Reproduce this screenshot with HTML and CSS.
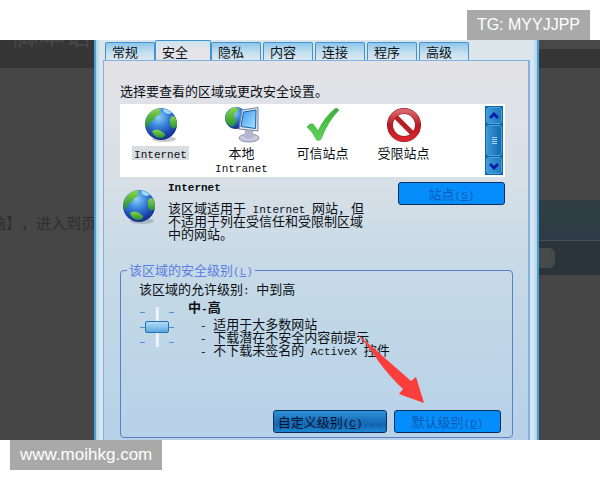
FILE: index.html
```html
<!DOCTYPE html>
<html lang="zh-CN">
<head>
    <meta charset="UTF-8">
    <meta name="viewport" content="width=device-width, initial-scale=1.0">
    <title>Internet 安全设置</title>
    <link rel="stylesheet" href="styles.css">
</head>
<body>
    <svg class="defs" width="0" height="0" aria-hidden="true">
        <defs>
            <radialGradient id="sea" cx="0.42" cy="0.28" r="0.75">
                <stop offset="0" stop-color="#8fd0fa"/>
                <stop offset="0.4" stop-color="#3b86dd"/>
                <stop offset="0.8" stop-color="#1b3fa8"/>
                <stop offset="1" stop-color="#152a80"/>
            </radialGradient>
            <linearGradient id="land" x1="0" y1="0" x2="0" y2="1">
                <stop offset="0" stop-color="#8fd64a"/>
                <stop offset="1" stop-color="#1f8f35"/>
            </linearGradient>
            <linearGradient id="screen" x1="0" y1="0" x2="1" y2="1">
                <stop offset="0" stop-color="#3f9cee"/>
                <stop offset="1" stop-color="#a8e2ff"/>
            </linearGradient>
            <linearGradient id="tick" x1="0" y1="0" x2="0" y2="1">
                <stop offset="0" stop-color="#3fae3c"/>
                <stop offset="1" stop-color="#5fd455"/>
            </linearGradient>
            <linearGradient id="ban" x1="0" y1="0" x2="0" y2="1">
                <stop offset="0" stop-color="#d8656a"/>
                <stop offset="0.5" stop-color="#b81a22"/>
                <stop offset="1" stop-color="#d8262c"/>
            </linearGradient>
            <symbol id="globe" viewBox="0 0 34 36">
                <ellipse cx="20" cy="32" rx="12" ry="3" fill="#8a94a0" opacity="0.5"/>
                <circle cx="17" cy="17" r="16" fill="url(#sea)"/>
                <path d="M1.500 20C0.500 12 5 4 13 1.500L17 2L15 5L17 7L12 9L10 13L6 15L4 20Z" fill="url(#land)"/>
                <path d="M19 1.500L24 3L28 6L24 7L20 5Z" fill="#9fdcf5"/>
                <path d="M28 9L31 10Q34 16 32.500 20L29 22L26 18L26 12Z" fill="url(#land)"/>
                <path d="M8 24Q13 21 17 24L21 27Q21 31 16 31Q10 31 8 24Z" fill="url(#land)"/>
            </symbol>
        </defs>
    </svg>

    <header class="tag tag-top">TG: MYYJJPP</header>

    <main class="photo">
        <div class="backdrop backdrop-left">
            <div class="ghost-title">脚本语</div>
            <div class="ghost-text">脑】，进入到页</div>
        </div>

        <section class="dialog">
            <nav class="tabs">
                <button class="tab">常规</button>
                <button class="tab active">安全</button>
                <button class="tab">隐私</button>
                <button class="tab">内容</button>
                <button class="tab">连接</button>
                <button class="tab">程序</button>
                <button class="tab">高级</button>
            </nav>

            <div class="panel">
                <p class="intro">选择要查看的区域或更改安全设置。</p>

                <div class="zones">
                    <div class="zone">
                        <svg class="zone-icon" viewBox="0 0 34 36"><use href="#globe"/></svg>
                        <span class="zone-name selected"><span class="en">Internet</span></span>
                    </div>
                    <div class="zone">
                        <svg class="zone-icon" viewBox="0 0 34 36">
                            <circle cx="11" cy="11" r="11" fill="url(#sea)"/>
                            <path d="M0.500 14C-0.500 7 4 1 10 0L14 3L10 6L9 10L12 13L8 20Q2 19 0.500 14Z" fill="url(#land)"/>
                            <ellipse cx="24" cy="31" rx="10" ry="4" fill="#c6c8dc" stroke="#8b8fae"/>
                            <path d="M20 23L28 24L29 30Q24 33 19 30Z" fill="#b4b6d0"/>
                            <path d="M17 3L33 0.500L33 24L14 22Z" fill="#e4e6ec" stroke="#7483a0"/>
                            <path d="M18.500 5L31 3L30.500 21.500L16 19.500Z" fill="url(#screen)" stroke="#1e60b0"/>
                        </svg>
                        <span class="zone-name">本地<br><span class="en">Intranet</span></span>
                    </div>
                    <div class="zone">
                        <svg class="zone-icon" viewBox="0 0 34 36">
                            <path d="M1 20Q4 16 7 17L12 24Q19 9 30 1L33 3Q22 14 15 32Q12 35 10 32Q7 25 1 20Z" fill="url(#tick)" stroke="#36a437" stroke-width="0.600"/>
                        </svg>
                        <span class="zone-name">可信站点</span>
                    </div>
                    <div class="zone">
                        <svg class="zone-icon" viewBox="0 0 34 36">
                            <circle cx="17" cy="18" r="14" fill="#fff" stroke="#8e1c20" stroke-width="6"/>
                            <path d="M7 8L27 28" stroke="#b81f25" stroke-width="5"/>
                            <circle cx="17" cy="18" r="14" fill="none" stroke="url(#ban)" stroke-width="5"/>
                        </svg>
                        <span class="zone-name">受限站点</span>
                    </div>
                    <div class="scrollbar">
                        <button class="scroll-btn" aria-label="向上"><svg viewBox="0 0 10 8"><path d="M1 6L5 2L9 6" /></svg></button>
                        <div class="thumb"><i></i><i></i><i></i><i></i></div>
                        <button class="scroll-btn" aria-label="向下"><svg viewBox="0 0 10 8"><path d="M1 2L5 6L9 2" /></svg></button>
                    </div>
                </div>

                <div class="about">
                    <svg class="about-icon" viewBox="0 0 34 36"><use href="#globe"/></svg>
                    <div class="about-text">
                        <h2><span class="en">Internet</span></h2>
                        <p>该区域适用于<span class="en"> Internet </span>网站，但<br>不适用于列在受信任和受限制区域<br>中的网站。</p>
                    </div>
                    <button class="btn btn-flat btn-sites" disabled>站点<span class="en">(<u>S</u>)</span></button>
                </div>

                <fieldset class="level">
                    <legend>该区域的安全级别<span class="en">(<u>L</u>)</span></legend>
                    <label class="allowed" for="level">该区域的允许级别<span class="en">: </span>中到高</label>
                    <div class="level-body">
                        <div class="slider">
                            <div class="ticks"><i></i><i></i><i></i></div>
                            <input id="level" type="range" min="0" max="2" value="1">
                            <div class="ticks"><i></i><i></i><i></i></div>
                        </div>
                        <div class="level-text">
                            <h3>中<span class="en">-</span>高</h3>
                            <ul>
                                <li><span class="en">- </span>适用于大多数网站</li>
                                <li><span class="en">- </span>下载潜在不安全内容前提示</li>
                                <li><span class="en">- </span>不下载未签名的<span class="en"> ActiveX </span>控件</li>
                            </ul>
                        </div>
                    </div>
                    <div class="actions">
                        <button class="btn btn-custom">自定义级别<span class="en">(<u>C</u>)<span class="dots">...</span></span></button>
                        <button class="btn btn-flat btn-default" disabled>默认级别<span class="en">(<u>D</u>)</span></button>
                    </div>
                    <svg class="arrow" viewBox="0 0 70 73" aria-hidden="true">
                        <path d="M0 0L57 50L62 46L70 72L45 63L49 58Q36 46 25 31Q14 14 0 0Z" fill="#fb3d3b"/>
                    </svg>
                </fieldset>
            </div>
        </section>

        <div class="backdrop backdrop-right">
            <div class="banner"></div>
            <div class="strip"><span class="blob"></span></div>
        </div>
    </main>

    <footer class="tag tag-bottom">www.moihkg.com</footer>
</body>
</html>
```
FILE: styles.css
```css
* {
    box-sizing: border-box;
}

body {
    margin: 0;
    padding: 10px 0;
    display: flex;
    flex-direction: column;
    background: #fff;
    color: #0b0f14;
    font-family: "Noto Sans CJK SC", sans-serif;
    font-size: 13px;
    line-height: 13px;
    text-spacing-trim: space-all;
}

h2, h3, p, ul {
    margin: 0;
    padding: 0;
    font-size: 13px;
}

button {
    font: inherit;
    color: inherit;
    padding: 0;
}

.defs {
    position: absolute;
}

.en {
    font-family: "Liberation Mono", monospace;
    font-size: 11px;
    line-height: 0;
    white-space: pre;
}

/* grey tags above and below the photo */
.tag {
    height: 30px;
    padding: 0 10px;
    background: #a9a9a9;
    color: #fff;
    font-family: "Liberation Sans", sans-serif;
    font-size: 16px;
    line-height: 30px;
}

.tag-top {
    align-self: flex-end;
    margin-right: 10px;
}

.tag-bottom {
    align-self: flex-start;
    margin-left: 10px;
    font-size: 17px;
}

.photo {
    display: grid;
    grid-template-columns: 94px 1fr 61px;
}

/* dimmed page behind the dialog */
.backdrop {
    overflow: hidden;
    white-space: nowrap;
}

.backdrop-left {
    background: linear-gradient(#363636 28px, #464646 28px);
}

.ghost-title {
    height: 28px;
    margin-top: -20px;
    padding-left: 13px;
    color: #464646;
    font-size: 26px;
    line-height: 28px;
}

.ghost-text {
    margin-top: 167px;
    text-indent: -9px;
    color: #2f2f2f;
    font-size: 15px;
    line-height: 16px;
}

.backdrop-right {
    padding-top: 160px;
    background: linear-gradient(#484848 9px, #353535 9px, #353535 28px, #464646 28px);
}

.banner {
    height: 41px;
    background: linear-gradient(#303f44, #2e3b46);
    border-bottom: 1px solid #454c54;
}

.strip {
    height: 34px;
    padding: 7px 0;
    background: #2c343b;
}

.blob {
    display: block;
    width: 16px;
    height: 20px;
    border-radius: 0 6px 6px 0;
    background: #464a4b;
}

/* dialog */
.dialog {
    display: flex;
    flex-direction: column;
    padding: 0 7px;
    border: solid #4a9fd8;
    border-width: 0 2px;
    background: linear-gradient(90deg, #a4d6f0, #dce6ea 4px, #dce6ea calc(100% - 4px), #a4d6f0);
}

.tabs {
    display: flex;
    align-items: flex-end;
    height: 21px;
    padding-left: 2px;
    margin-bottom: -1px;
    gap: 2px;
}

.tab {
    width: 50px;
    height: 19px;
    padding: 0 12px 0 6px;
    border: 1px solid #3f93d2;
    border-bottom-color: #7fb4e2;
    border-radius: 2px 2px 0 0;
    background: linear-gradient(#8fc6ea, #c4e0f0 60%, #dfe8ee);
    line-height: 17px;
    text-align: left;
    white-space: nowrap;
}

.tab.active {
    width: 56px;
    height: 21px;
    margin: 0 -2px;
    border-bottom: 0;
    background: linear-gradient(#cfe3ee, #e4e4e8 50%);
    line-height: 17px;
}

.panel {
    padding: 22px 15px 2px 16px;
    border: solid #7cb2e6;
    border-width: 1px 2px 0 1px;
    background: linear-gradient(#e3e2e6, #d9e0e7 30%, #c8dae6 52%, #bed6e7 75%, #b9d1e8);
}

.intro {
    height: 21px;
    line-height: 16px;
}

.zones {
    display: flex;
    height: 73px;
    margin-right: 8px;
    padding: 2px;
    padding-left: 0;
    background: #fff;
}

.zone {
    flex: 0 1 81px;
    display: flex;
    flex-direction: column;
    align-items: center;
    gap: 3px;
    padding-top: 1px;
    text-align: center;
}

.zone-icon {
    flex: none;
    width: 36px;
    height: 36px;
}

.zone-name {
    padding: 0 2px;
    line-height: 14px;
}

.zone-name.selected {
    background: #d9dde0;
}

.scrollbar {
    display: flex;
    flex-direction: column;
    gap: 1px;
    width: 18px;
    margin-left: auto;
    padding: 1px;
    background: #0c66a8;
}

.scroll-btn {
    display: flex;
    align-items: center;
    justify-content: center;
    height: 17px;
    border: 1px solid #4aa4dc;
    border-radius: 3px;
    background: linear-gradient(90deg, #3f9bd8, #1f78c2);
}

.scroll-btn svg {
    width: 10px;
    height: 8px;
    fill: none;
    stroke: #0a1fa8;
    stroke-width: 3;
}

.thumb {
    flex: 1;
    display: flex;
    flex-direction: column;
    align-items: center;
    justify-content: center;
    gap: 1px;
    border: 1px solid #4aa4dc;
    border-radius: 3px;
    background: linear-gradient(90deg, #3a96d4, #1468b0);
}

.thumb i {
    width: 5px;
    height: 1px;
    background: #9fd4f4;
}

.about {
    display: flex;
    align-items: flex-start;
    margin-right: 8px;
    padding-top: 5px;
}

.about-icon {
    width: 36px;
    height: 36px;
    margin: 7px 11px 0 1px;
}

.about-text {
    flex: 1;
    padding-bottom: 2px;
    white-space: nowrap;
}

.about-text h2 {
    margin: -3px 0 9px;
}

.btn {
    height: 23px;
    border: 1px solid #0b2f5c;
    border-radius: 3px;
    line-height: 18px;
    white-space: nowrap;
}

.btn-flat {
    width: 107px;
    background: #048dfb;
    color: #0a5cb4;
}

.btn-custom {
    width: 114px;
    background: linear-gradient(#2e93d8, #1a72bc 45%, #1566b2 65%, #1c86d2);
    color: #04142c;
}

.dots {
    color: #0d4f94;
}

/* security level group */
.level {
    position: relative;
    min-width: 0;
    margin: 20px 0 0;
    padding: 3px 11px 4px 18px;
    border: 1px solid #5880c8;
    border-radius: 4px;
}

.level legend {
    margin-left: -12px;
    padding: 0 2px;
    color: #5c7ee0;
    line-height: 16px;
}

.allowed {
    display: block;
    line-height: 16px;
}

.level-body {
    display: flex;
    gap: 13px;
    padding-top: 3px;
}

.slider {
    display: flex;
    align-items: center;
    justify-content: center;
    width: 36px;
    height: 44px;
    margin-top: 5px;
}

.ticks {
    display: flex;
    flex-direction: column;
    justify-content: space-between;
    height: 31px;
}

.ticks i {
    width: 5px;
    height: 1px;
    background: #4a96d4;
}

.slider input {
    appearance: none;
    writing-mode: vertical-lr;
    direction: rtl;
    width: 24px;
    height: 40px;
    margin: 0;
    background: linear-gradient(90deg, transparent 10px, #9cc0dc 10px, #f0f6fa 11px, #e4eef6 14px, transparent 14px);
}

.slider input::-webkit-slider-thumb {
    appearance: none;
    width: 24px;
    height: 12px;
    border: 1px solid #2470b4;
    border-radius: 2px;
    background: linear-gradient(#b4dcf6, #5aa8e0);
}

.level-text ul {
    padding: 4px 0 0 12px;
    list-style: none;
    white-space: nowrap;
}

.actions {
    display: flex;
    justify-content: flex-end;
    gap: 7px;
    padding-top: 54px;
}

.arrow {
    position: absolute;
    right: 88px;
    bottom: 33px;
    width: 70px;
    height: 73px;
}
```
